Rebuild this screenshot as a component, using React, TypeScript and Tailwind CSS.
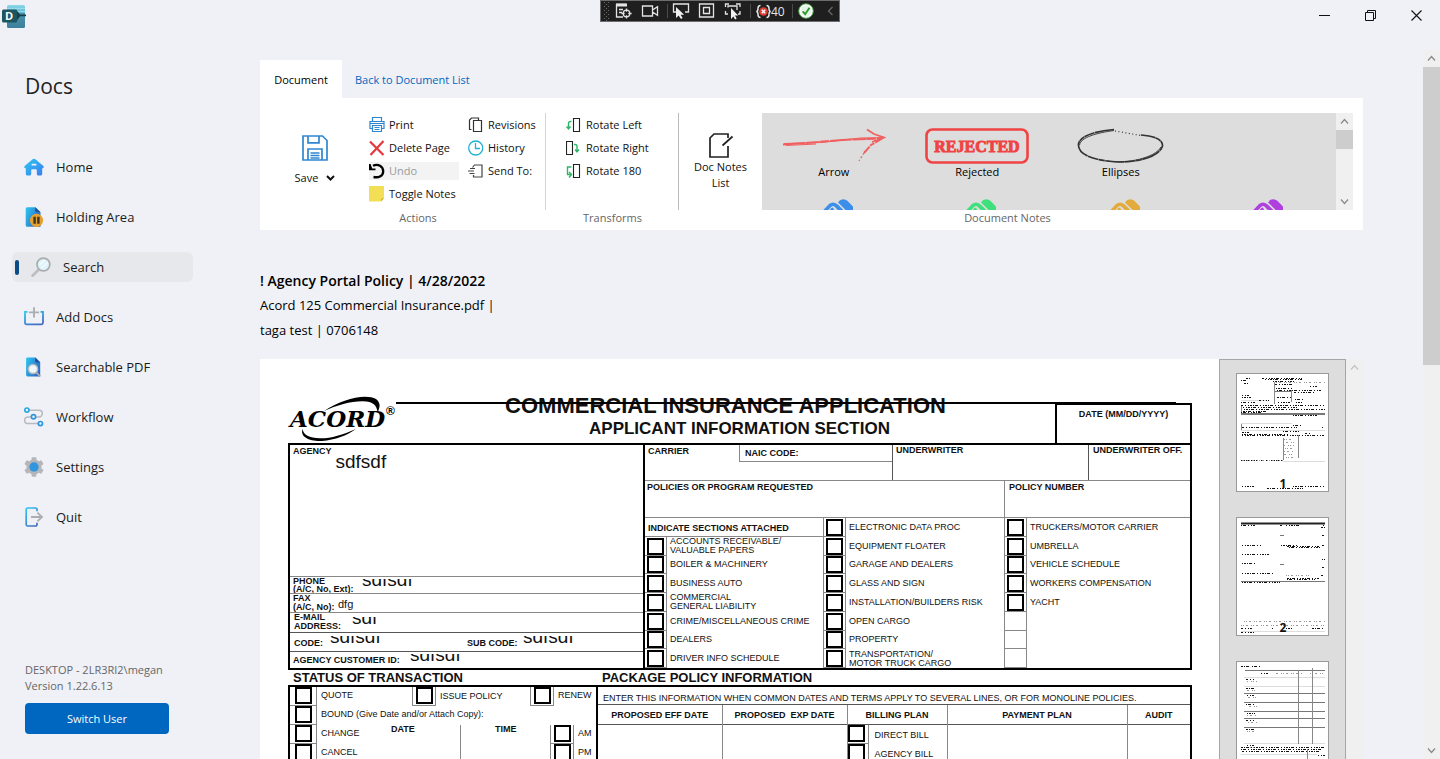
import React from "react";

type Kids = { children?: React.ReactNode };

/* ---------- navigation icons ---------- */

function Gradients() {
  return (
    <svg width="0" height="0" className="absolute" aria-hidden="true">
      <defs>
        <linearGradient id="sky" x1="0" y1="0" x2="1" y2="1">
          <stop offset="0" stopColor="#2fc8f2" />
          <stop offset="1" stopColor="#3a7cf0" />
        </linearGradient>
        <linearGradient id="page" x1="0" y1="0.2" x2="1" y2="0.8">
          <stop offset="0" stopColor="#2cc0ee" />
          <stop offset="1" stopColor="#2f5fbe" />
        </linearGradient>
        <linearGradient id="edge" x1="0" y1="0" x2="0.6" y2="1">
          <stop offset="0" stopColor="#2fc8f2" />
          <stop offset="1" stopColor="#4470c4" />
        </linearGradient>
        <linearGradient id="logo" x1="0" y1="0" x2="0" y2="1">
          <stop offset="0" stopColor="#8ad8ea" />
          <stop offset="0.35" stopColor="#5fb6cc" />
          <stop offset="0.36" stopColor="#4a94ad" />
          <stop offset="1" stopColor="#3d7f9b" />
        </linearGradient>
      </defs>
    </svg>
  );
}

const HomeIcon = () => (
  <svg width="20" height="20" viewBox="0 0 20 20">
    <path
      fillRule="evenodd"
      fill="url(#sky)"
      d="M8.6 2.2a2.4 2.4 0 0 1 2.8 0l7.7 6.5c1.3 1.2.6 2.6-.9 2.6V17a1.6 1.6 0 0 1-1.6 1.5h-2.2A1.6 1.6 0 0 1 12.800 17v-3.500c0-.8-.5-1.300-1.200-1.300H8.400c-.7 0-1.200.5-1.200 1.300V17a1.600 1.600 0 0 1-1.600 1.500H3.400A1.600 1.600 0 0 1 1.800 17v-5.700c-1.500 0-2.200-1.400-.9-2.600zM8.400 6.800a.9.9 0 0 0 0 1.800h3.200a.9.9 0 0 0 0-1.800z"
    />
  </svg>
);
const HoldingIcon = () => (
  <svg width="20" height="20" viewBox="0 0 20 20">
    <path d="M3.200.2h8.300l5 5v14.600H3.200A1.500 1.500 0 0 1 1.700 18.300V1.700A1.500 1.500 0 0 1 3.200.2z" fill="url(#page)" />
    <path d="M11.200.2l5.300 5h-3.800a1.500 1.500 0 0 1-1.500-1.500z" fill="#2350a0" />
    <circle cx="12.500" cy="13.300" r="6.600" fill="#e8a02c" />
    <path d="M9.400 9.800h2.400v7H9.400zM13.200 9.800h2.400v7h-2.400z" fill="#3b3428" />
  </svg>
);
const SearchIcon = () => (
  <svg width="20" height="20" viewBox="0 0 20 20">
    <path d="M1.500 18.700l6.300-6.200" stroke="#bdbdbf" strokeWidth="2.600" strokeLinecap="round" />
    <circle cx="12.400" cy="7.500" r="6.400" fill="#dff3fb" stroke="#a9abae" strokeWidth="1.700" />
    <path d="M8.600 8l5-4.800M10.500 11l6-5.600" stroke="#f3fbff" strokeWidth="1.300" />
  </svg>
);
const AddIcon = () => (
  <svg width="20" height="20" viewBox="0 0 20 20" fill="none">
    <path d="M3.500 4.800H1V15.500A1.800 1.800 0 0 0 2.800 17.300h14.400a1.800 1.800 0 0 0 1.800-1.800V4.800h-2.500" stroke="url(#edge)" strokeWidth="1.800" />
    <path d="M10 .3v10.200M4.900 5.400h10.200" stroke="#acaeb1" strokeWidth="1.900" />
  </svg>
);
const PdfIcon = () => (
  <svg width="20" height="20" viewBox="0 0 20 20">
    <path d="M3.500.4h8l4.700 4.800v14.300H3.500A1.400 1.400 0 0 1 2.100 18.100V1.800A1.400 1.400 0 0 1 3.500.4z" fill="url(#page)" />
    <path d="M11.200.4l5 5h-3.700a1.300 1.300 0 0 1-1.300-1.300z" fill="#234a9c" />
    <path d="M12.200 15.300l4 4" stroke="#a9abae" strokeWidth="1.900" />
    <circle cx="9" cy="12" r="4.600" fill="#eef7fc" stroke="#b6babf" strokeWidth="1.500" />
  </svg>
);
const WorkflowIcon = () => (
  <svg width="20" height="20" viewBox="0 0 20 20" fill="none">
    <path d="M4 3.200h11a3.300 3.300 0 0 1 0 6.700H4a3.300 3.300 0 0 0 0 6.700h11" stroke="#b9bbbe" strokeWidth="1.500" />
    <circle cx="2.900" cy="3.100" r="2.100" fill="#e8f6fd" stroke="#2aa6e0" strokeWidth="1.700" />
    <circle cx="9.500" cy="9.800" r="2.100" fill="#e8f6fd" stroke="#2f95dc" strokeWidth="1.700" />
    <circle cx="16.400" cy="16.600" r="2.100" fill="#e8f6fd" stroke="#2f95dc" strokeWidth="1.700" />
  </svg>
);
const SettingsIcon = () => (
  <svg width="20" height="20" viewBox="0 0 20 20">
    <g fill="#b5b6b9">
      <circle cx="10" cy="10" r="7.600" />
      <rect x="7.600" y=".2" width="4.800" height="19.600" rx="1" />
      <rect x="7.600" y=".2" width="4.800" height="19.600" rx="1" transform="rotate(60 10 10)" />
      <rect x="7.600" y=".2" width="4.800" height="19.600" rx="1" transform="rotate(120 10 10)" />
    </g>
    <circle cx="10" cy="10" r="4.700" fill="#3096dd" />
  </svg>
);
const QuitIcon = () => (
  <svg width="20" height="20" viewBox="0 0 20 20" fill="none">
    <path d="M13 4.300V2.400A1.400 1.400 0 0 0 11.600 1H3.800A1.600 1.600 0 0 0 2.200 2.600v14.800A1.600 1.600 0 0 0 3.800 19h7.800A1.400 1.400 0 0 0 13 17.600v-1.900" stroke="url(#edge)" strokeWidth="1.700" />
    <path d="M7 10h10.500M13.400 5.600L18 10l-4.600 4.400" stroke="#acaeb1" strokeWidth="1.800" />
  </svg>
);

const navItems = [
  { label: "Home", icon: HomeIcon },
  { label: "Holding Area", icon: HoldingIcon },
  { label: "Search", icon: SearchIcon, active: true },
  { label: "Add Docs", icon: AddIcon },
  { label: "Searchable PDF", icon: PdfIcon },
  { label: "Workflow", icon: WorkflowIcon },
  { label: "Settings", icon: SettingsIcon },
  { label: "Quit", icon: QuitIcon },
];

/* ---------- title bar ---------- */

function TitleBar() {
  const stroke = { fill: "none", stroke: "#e4e4e4", strokeWidth: 1.300 };
  return (
    <header className="grid h-8 shrink-0 grid-cols-[1fr_auto_1fr] items-start">
      <svg width="26" height="28" viewBox="0 0 26 28" className="mt-1 ml-0.5" aria-label="Docs logo">
        <rect x="5" y="1" width="18" height="23" rx="1.500" fill="url(#logo)" />
        <path d="M5 4.500h18M5 7.500h18" stroke="#a6e4f1" strokeWidth=".7" />
        <path d="M14 5.500l4 5h6v1.700h-6L14 18z" fill="#173f49" />
        <rect x="0" y="5.500" width="15" height="13" rx="1.500" fill="#1d5561" />
        <text x="3" y="16" fontSize="11" fontWeight="bold" fill="#fff" fontFamily="Open Sans, sans-serif">D</text>
      </svg>
      <div className="flex h-[22px] w-[240px] items-center border border-[#6d6d6d] bg-[#1f1f1f]">
        <svg width="238" height="20" viewBox="0 0 238 20" className="shrink-0">
          <g fill="#6a6a6a">
            {[0, 1, 2, 3, 4].map((r) => (
              <g key={r}>
                <rect x="3" y={1 + r * 4} width="1" height="1" />
                <rect x="7" y={1 + r * 4} width="1" height="1" />
                <rect x="5" y={3 + r * 4} width="1" height="1" />
              </g>
            ))}
          </g>
          <g {...stroke}>
            <path d="M22 16h-6.500V3.500H25M18 8.500h4M18 11.500h3" />
            <path d="M15 2.500h11v3H15z" fill="#e4e4e4" stroke="none" />
            <circle cx="25.500" cy="12.500" r="3.300" />
            <path d="M25.500 7.500v3.200M25.500 14.300v3.300M20.500 12.500h3.200M27.300 12.500h3.300" />
            <path d="M41.500 5h10v10h-10zM51.500 9l5-3.300v8.600l-5-3.300" />
            <path d="M77 11h-4.500V3h15v8H84" />
            <path d="M98.500 3h14v13h-14zM102.500 6.500h6v6h-6z" />
            <path d="M124.500 6V3h3.500M135 3h4v3M139 10v3h-2M127 13h-2.500v-3M127 6.500V5h9v4" />
          </g>
          <path d="M75 6v11l2.600-2.600L80 18l1.600-1-2-3.200h3.600zM130 7v11l2.400-2.600 1.700 3 1.600-.9-1.800-3h3.300z" fill="#f2f2f2" />
          <path d="M66.500 3v14M149.500 3v14M191.500 3v14" stroke="#4a4a4a" />
          <g fill="none" stroke="#e6e6e6" strokeWidth="1.500">
            <path d="M159.500 4.500q-2.500 0-2.500 3t-1.800 3q1.800 0 1.800 3t2.500 3M165.500 4.500q2.500 0 2.500 3t1.800 3q-1.800 0-1.800 3t-2.500 3" />
          </g>
          <circle cx="162.500" cy="10.500" r="4.300" fill="#e03c31" />
          <path d="M160.800 8.800l3.400 3.400M164.200 8.800l-3.400 3.400" stroke="#fff" strokeWidth="1.400" />
          <text x="170" y="15" fontSize="12" fill="#e6e6e6" fontFamily="Open Sans, sans-serif">40</text>
          <circle cx="205" cy="10" r="7.300" fill="#fff" stroke="#3c9b3c" strokeWidth="1" />
          <circle cx="205" cy="10" r="5.600" fill="#e7f5e7" />
          <path d="M201.700 10.300l2.500 2.800 4.300-6.300" fill="none" stroke="#2e9a35" strokeWidth="1.900" />
          <path d="M231.500 6l-4 4 4 4" fill="none" stroke="#6a6a6a" strokeWidth="1.200" />
        </svg>
      </div>
      <div className="flex justify-end pr-px">
        <button aria-label="Minimize" className="flex h-[30px] w-[46px] items-center justify-center">
          <svg width="11" height="11"><path d="M0 5.500h11" stroke="#111" /></svg>
        </button>
        <button aria-label="Restore" className="flex h-[30px] w-[46px] items-center justify-center">
          <svg width="11" height="11" fill="none" stroke="#111"><path d="M.5 2.500h8v8h-8zM2.500 2.500v-2h8v8h-2" /></svg>
        </button>
        <button aria-label="Close" className="flex h-[30px] w-[46px] items-center justify-center">
          <svg width="11" height="11" fill="none" stroke="#111" strokeWidth="1.100"><path d="M.5.5l10 10M10.500.5l-10 10" /></svg>
        </button>
      </div>
    </header>
  );
}

/* ---------- sidebar ---------- */

function Sidebar() {
  return (
    <aside className="flex w-[205px] shrink-0 flex-col pb-[25px]">
      <h1 className="mt-[39px] pl-[25px] text-[21px] leading-[30px] text-[#222]">Docs</h1>
      <nav className="mt-[51px] flex flex-col gap-5 pl-3">
        {navItems.map(({ label, icon: Icon, active }) => (
          <a
            key={label}
            href="#"
            className={
              active
                ? "flex h-[30px] w-[181px] items-center gap-3 rounded-md bg-[#e7e8ec] pl-[3px] text-[13px] text-[#1b1b1b]"
                : "flex h-[30px] w-[181px] items-center gap-3 pl-3 text-[13px] text-[#1b1b1b]"
            }
          >
            {active && <span className="h-[15px] w-1 rounded-full bg-[#0b4a85]" />}
            <Icon />
            <span className="pt-0.5">{label}</span>
          </a>
        ))}
      </nav>
      <div className="mt-auto pl-[25px]">
        <p className="text-[11px] leading-4 text-[#666]">
          DESKTOP - 2LR3RI2\megan
          <br />
          Version 1.22.6.13
        </p>
        <button className="mt-[9px] h-[31px] w-36 rounded-sm bg-[#0067c0] pt-px text-[11px] text-white">Switch User</button>
      </div>
    </aside>
  );
}

/* ---------- ribbon ---------- */

const PrintIcon = () => (
  <svg width="16" height="16" viewBox="0 0 16 16" fill="none" stroke="#2f86d0" strokeWidth="1.200">
    <path d="M3.500 4.500v-4h9v4M3.500 11.500h-2.500v-7h14v7h-2.500M3.500 8.500h9v6h-9zM1 6.500h14M5.500 10.500h5M5.500 12.500h5" />
  </svg>
);
const DeleteIcon = () => (
  <svg width="16" height="16" viewBox="0 0 16 16" stroke="#e5393d" strokeWidth="2.200" fill="none">
    <path d="M1 1.500l13.500 13.500M14.500 1L1.500 15" />
  </svg>
);
const UndoIcon = () => (
  <svg width="16" height="16" viewBox="0 0 16 16" fill="none">
    <path d="M4 2.800C9 .2 14.200 3.500 14.200 8.200S10 15 4.500 14" stroke="#000" strokeWidth="2.300" />
    <path d="M0 1v6.200h6.500V5.500H3.200L1.600 1z" fill="#000" />
  </svg>
);
const NoteIcon = () => (
  <svg width="16" height="16" viewBox="0 0 16 16">
    <path d="M0 0h15v12.500L12 15.500H0z" fill="#f3df55" />
    <path d="M15 12.500h-3v3z" fill="#d2b631" />
  </svg>
);
const RevisionsIcon = () => (
  <svg width="16" height="16" viewBox="0 0 16 16" fill="none" stroke="#333" strokeWidth="1.200">
    <path d="M5.500 3.500h8v11h-8zM3.500 12.500h-2V3L3.500 1H10.500v2.500" />
  </svg>
);
const HistoryIcon = () => (
  <svg width="16" height="16" viewBox="0 0 16 16" fill="none" stroke="#1fb2d6" strokeWidth="1.300">
    <circle cx="7.700" cy="8" r="7" />
    <path d="M7.500 3v5.500H12" />
  </svg>
);
const SendIcon = () => (
  <svg width="16" height="16" viewBox="0 0 16 16" fill="none" stroke="#444" strokeWidth="1.200">
    <path d="M4.500 4.500l2-2.500H14v12H5.500v-2M2 5.500h5M0 8h6M1.500 10.500h5" />
  </svg>
);
const RotateLeftIcon = () => (
  <svg width="16" height="16" viewBox="0 0 16 16" fill="none" strokeWidth="1.100">
    <path d="M7.500 1.500h6v13h-6z" stroke="#222" />
    <path d="M5.500 4.500h-1q-2 0-2 2V12M.5 9.500l2 2.500 2-2.500" stroke="#2fb56a" strokeWidth="1.400" />
  </svg>
);
const RotateRightIcon = () => (
  <svg width="16" height="16" viewBox="0 0 16 16" fill="none" strokeWidth="1.100">
    <path d="M.5 1.500h6v13h-6z" stroke="#222" />
    <path d="M8 4.500h1q2 0 2 2V12M9 9.500l2 2.500 2-2.500" stroke="#2fb56a" strokeWidth="1.400" />
  </svg>
);
const Rotate180Icon = () => (
  <svg width="16" height="16" viewBox="0 0 16 16" fill="none" strokeWidth="1.100">
    <path d="M7.500 1.500h6v13h-6z" stroke="#222" />
    <path d="M5.500 4H1.500v7.500H5M3 9l2.500 2.500L3 14.500" stroke="#2fb56a" strokeWidth="1.400" />
  </svg>
);

function Tool({ icon: Icon, children, off }: Kids & { icon: () => React.ReactElement; off?: boolean }) {
  return (
    <button
      disabled={off}
      className={
        off
          ? "flex h-[18px] items-center gap-1 overflow-hidden bg-[#f3f3f3] text-[11px] whitespace-nowrap text-[#9b9b9b]"
          : "flex h-[18px] items-center gap-1 overflow-hidden text-[11px] whitespace-nowrap text-[#111]"
      }
    >
      <span className="shrink-0">
        <Icon />
      </span>
      {children}
    </button>
  );
}

function GroupLabel({ children }: Kids) {
  return <div className="text-center text-[11px] leading-4 text-[#666]">{children}</div>;
}

function Chevron({ up, pale }: { up?: boolean; pale?: boolean }) {
  return (
    <svg width="9" height="9" viewBox="0 0 9 9" fill="none" stroke={pale ? "#c4c4c4" : "#8b8b8b"} strokeWidth="1.300">
      <path d={up ? "M1 6.500l3.500-4 3.500 4" : "M1 2.500l3.500 4 3.500-4"} />
    </svg>
  );
}

const ArrowStamp = () => (
  <svg width="104" height="36" viewBox="0 0 104 36" fill="none" stroke="#f16060">
    <path d="M1 16.500L30 14.500L60 12L98 10.500" strokeWidth="2" strokeDasharray="22 .6 14 .4 9 1" />
    <path d="M2 15.500L40 14.500L78 10L101 9.500M4 17.500L34 16" strokeWidth="1.200" />
    <path d="M85 1.500L92 6L102 9.500L90 14" strokeWidth="1.700" />
    <path d="M101 10L89 17L82 25" strokeWidth="2" strokeDasharray="9 1 5 1" />
    <path d="M82 25L77 33" strokeWidth="1.200" strokeDasharray="2 2" />
  </svg>
);
const RejectedStamp = () => (
  <svg width="104" height="36" viewBox="0 0 104 36">
    <rect x="1.500" y="1.500" width="101" height="33" rx="6" fill="none" stroke="#f04343" strokeWidth="2.600" />
    <text x="52" y="24" textAnchor="middle" fontSize="16" fontWeight="bold" fill="#f04343" stroke="#f04343" strokeWidth=".9" fontFamily="Liberation Serif, serif">
      REJECTED
    </text>
  </svg>
);
const EllipseStamp = () => (
  <svg width="88" height="36" viewBox="0 0 88 36" fill="none" stroke="#333">
    <path d="M37 1.500C18 3 3 8 1.500 16C.5 27 18 33 42 34C66 34 83 27 85.500 18C86 11 76 8 64 7" strokeWidth="1.700" strokeDasharray="19 .5 11 .4 6 .4" />
    <path d="M37 2.500C20 5 4 9 2.500 17M30 33C50 36 78 30 84 19" strokeWidth=".9" />
    <path d="M38 3L64 7.500" strokeWidth="1.200" strokeDasharray="1 2.500" />
  </svg>
);
function Marker({ color }: { color: string }) {
  return (
    <svg width="30" height="30" viewBox="0 0 30 30">
      <path d="M0 14L7 6.500q3-2.500 6 0L21 15" fill="none" stroke={color} strokeWidth="3.600" />
      <path d="M7 13q-.5-4 3-4.500L12 13z" fill={color} />
      <rect x="15.500" y="0" width="11.500" height="18" rx="5.700" transform="rotate(-45 21 7)" fill={color} />
      <path d="M13 2.500l14 14" stroke="#ddd" strokeWidth="1.600" />
    </svg>
  );
}

function StampTile({ label, children }: Kids & { label: string }) {
  return (
    <button className="flex h-[84px] flex-col items-center pt-[15px] text-[11px] leading-4 text-black">
      {children}
      {label}
    </button>
  );
}

function Ribbon() {
  return (
    <section>
      <div className="flex h-[38px]">
        <button className="w-[82px] bg-white pt-0.5 text-[11px] text-black">Document</button>
        <a href="#" className="flex items-center px-[13px] pt-0.5 text-[11px] text-[#0067c0]">Back to Document List</a>
      </div>
      <div className="flex h-[132px] bg-white pt-[15px] pr-[10px] pl-[30px]">
        <div className="w-64 shrink-0">
          <div className="flex h-[97px] border-r border-[#d4d4d4]">
            <button className="flex w-[50px] flex-col items-center pt-[22px] text-[11px] leading-4 text-[#111]">
              <svg width="26" height="26" viewBox="0 0 26 26" fill="none" stroke="#2f86d0" strokeWidth="1.700">
                <path d="M1 1h19.500L25 5.500V25H1zM6 1.500v6.300h11V1.500M6 25V14h14v11M8.500 18h9M8.500 20.500h9M8.500 23h9" />
              </svg>
              <span className="mt-[9px] flex items-center gap-2">
                Save
                <svg width="9" height="6"><path d="M1 1l3.500 3.500L8 1" fill="none" stroke="#111" strokeWidth="2" /></svg>
              </span>
            </button>
            <div className="ml-[29px] flex w-[90px] flex-col gap-[5px] pt-[3px]">
              <Tool icon={PrintIcon}>Print</Tool>
              <Tool icon={DeleteIcon}>Delete Page</Tool>
              <Tool icon={UndoIcon} off>Undo</Tool>
              <Tool icon={NoteIcon}>Toggle Notes</Tool>
            </div>
            <div className="ml-[9px] flex flex-col gap-[5px] pt-[3px]">
              <Tool icon={RevisionsIcon}>Revisions</Tool>
              <Tool icon={HistoryIcon}>History</Tool>
              <Tool icon={SendIcon}>Send To:</Tool>
            </div>
          </div>
          <GroupLabel>Actions</GroupLabel>
        </div>
        <div className="w-[133px] shrink-0">
          <div className="flex h-[97px] flex-col gap-[5px] border-r border-[#bbb] pt-[3px] pl-5">
            <Tool icon={RotateLeftIcon}>Rotate Left</Tool>
            <Tool icon={RotateRightIcon}>Rotate Right</Tool>
            <Tool icon={Rotate180Icon}>Rotate 180</Tool>
          </div>
          <GroupLabel>Transforms</GroupLabel>
        </div>
        <div className="min-w-0 flex-1">
          <div className="flex h-[97px]">
            <button className="flex w-[83px] shrink-0 flex-col items-center pt-5 text-[11px] leading-4 text-[#111]">
              <svg width="26" height="26" viewBox="0 0 26 26" fill="none" stroke="#222" strokeWidth="1.700">
                <path d="M20 5V1H6L2 5v19h18V13" />
                <path d="M14.500 12.500L24.500 3.500" />
              </svg>
              Doc Notes
              <br />
              List
            </button>
            <div className="grid flex-1 grid-cols-4 content-start overflow-hidden bg-[#ddd]">
              <StampTile label="Arrow"><ArrowStamp /></StampTile>
              <StampTile label="Rejected"><RejectedStamp /></StampTile>
              <StampTile label="Ellipses"><EllipseStamp /></StampTile>
              <span />
              {["#3b8eea", "#3fe07c", "#e2ab3c", "#b03fe0"].map((c) => (
                <div key={c} className="flex justify-center pt-0.5 pl-2">
                  <Marker color={c} />
                </div>
              ))}
            </div>
            <div className="flex w-[17px] flex-col items-center bg-[#f0f0f0]">
              <span className="flex h-[17px] items-center"><Chevron up /></span>
              <span className="h-[19px] w-full bg-[#cdcdcd]" />
              <span className="mt-auto flex h-[17px] items-center"><Chevron /></span>
            </div>
          </div>
          <div className="pr-[17px]">
            <GroupLabel>Document Notes</GroupLabel>
          </div>
        </div>
      </div>
    </section>
  );
}

/* ---------- insurance form ---------- */

function Box({ label }: { label: string }) {
  return (
    <input
      type="checkbox"
      aria-label={label}
      className="block size-[17px] shrink-0 appearance-none border-2 border-black bg-white"
    />
  );
}

/* The lower half of a value whose field is shorter than its text */
function CutValue({ children }: Kids) {
  return (
    <span className="flex h-[9px] items-end overflow-hidden">
      <span className="text-[19px] leading-[17px] font-normal">{children}</span>
    </span>
  );
}

function SectionRow({ label, empty }: { label: string; empty?: boolean }) {
  const lines = label.split("\n");
  return (
    <div className="flex min-h-0">
      <div className="flex w-[22px] shrink-0 items-end justify-center border-r border-b border-[#888]">
        {!empty && <Box label={lines.join(" ")} />}
      </div>
      <div className="flex flex-col justify-center pl-[3px] leading-[9px] whitespace-nowrap">
        {lines.map((l) => (
          <span key={l}>{l}</span>
        ))}
      </div>
    </div>
  );
}

const colA = [
  "ACCOUNTS RECEIVABLE/\nVALUABLE PAPERS",
  "BOILER & MACHINERY",
  "BUSINESS AUTO",
  "COMMERCIAL\nGENERAL LIABILITY",
  "CRIME/MISCELLANEOUS CRIME",
  "DEALERS",
  "DRIVER INFO SCHEDULE",
];
const colB = [
  "ELECTRONIC DATA PROC",
  "EQUIPMENT FLOATER",
  "GARAGE AND DEALERS",
  "GLASS AND SIGN",
  "INSTALLATION/BUILDERS RISK",
  "OPEN CARGO",
  "PROPERTY",
  "TRANSPORTATION/\nMOTOR TRUCK CARGO",
];
const colC = ["TRUCKERS/MOTOR CARRIER", "UMBRELLA", "VEHICLE SCHEDULE", "WORKERS COMPENSATION", "YACHT"];

function AcordLogo() {
  return (
    <svg width="108" height="48" viewBox="0 0 108 48" aria-label="ACORD logo">
      <path d="M36 16C53 4 78-2 88 4c5 4 4 8 1.500 13.500C89 10 85 6.500 75 6.200C63 6 49 10 36 16z" />
      <path d="M14.500 34C12 42 21 46.500 34 46c13-1 25-5.500 34-12C54 40 43 43.500 32 43.300C21 43 15.500 40 14.500 34z" />
      <text x="2" y="31.500" fontSize="23" fontWeight="bold" fontStyle="italic" fontFamily="DejaVu Serif, serif">ACORD</text>
      <text x="98" y="20" fontSize="12" fontWeight="bold" fontFamily="Liberation Sans, sans-serif">®</text>
    </svg>
  );
}

function FormHeader() {
  return (
    <div className="relative flex h-12">
      <div className="absolute top-[7px] right-4 left-[108px] h-0.5 bg-black" />
      <AcordLogo />
      <div className="min-w-0 flex-1 text-center font-bold whitespace-nowrap">
        <div className="text-[22px] leading-[22px]">COMMERCIAL INSURANCE APPLICATION</div>
        <div className="pl-7 text-[17px] leading-[24px]">APPLICANT INFORMATION SECTION</div>
      </div>
      <div className="mt-2 w-[137px] shrink-0 border-t-2 border-r-2 border-l-2 border-black pt-[3px] text-center text-[9px] leading-[12px] font-bold">
        DATE (MM/DD/YYYY)
      </div>
    </div>
  );
}

function AgencyPanel() {
  return (
    <div className="flex w-[355px] shrink-0 flex-col border-r-2 border-black font-bold">
      <div className="flex h-[131px] pl-[3px] leading-3">
        AGENCY
        <span className="pt-[7px] pl-1 text-[19px] leading-5 font-normal">sdfsdf</span>
      </div>
      <div className="flex h-[17px] shrink-0 border-t border-[#888] pl-[3px] leading-[8px]">
        <div className="w-[69px]">PHONE<br />(A/C, No, Ext):</div>
        <div className="pt-0.5"><CutValue>sdfsdf</CutValue></div>
      </div>
      <div className="flex h-[19px] shrink-0 border-t border-[#888] pl-[3px] leading-[9px]">
        <div className="w-[45px]">FAX<br />(A/C, No):</div>
        <span className="pt-1 text-[11px] leading-3 font-normal">dfg</span>
      </div>
      <div className="flex h-5 shrink-0 border-t border-[#888] pl-1 leading-[9px]">
        <div className="w-[58px]">E-MAIL<br />ADDRESS:</div>
        <div className="pt-1"><CutValue>sdf</CutValue></div>
      </div>
      <div className="flex h-[19px] shrink-0 border-t border-[#555] pl-1 leading-5">
        <div className="w-[36px]">CODE:</div>
        <div className="w-[137px] pt-[3px]"><CutValue>sdfsdf</CutValue></div>
        <div className="w-[56px]">SUB CODE:</div>
        <div className="pt-[3px]"><CutValue>sdfsdf</CutValue></div>
      </div>
      <div className="flex flex-1 border-t border-[#555] pl-[3px] leading-4">
        <div className="w-[117px]">AGENCY CUSTOMER ID:</div>
        <div className="pt-0.5"><CutValue>sdfsdf</CutValue></div>
      </div>
    </div>
  );
}

function CarrierPanel() {
  return (
    <div className="flex min-w-0 flex-1 flex-col">
      <div className="flex h-9 shrink-0 border-b border-[#888] leading-[11px] font-bold">
        <div className="w-[94px] pt-px pl-[3px]">CARRIER</div>
        <div className="h-[17px] w-[153px] border-b border-l border-[#888] pt-[3px] pl-[5px]">NAIC CODE:</div>
        <div className="w-[197px] border-r border-l border-[#555] pl-[3px]">UNDERWRITER</div>
        <div className="pl-1 whitespace-nowrap">UNDERWRITER OFF.</div>
      </div>
      <div className="flex h-[37px] shrink-0 border-b border-[#888] leading-3 font-bold">
        <div className="w-[359px] pl-0.5">POLICIES OR PROGRAM REQUESTED</div>
        <div className="flex-1 border-l border-[#888] pl-1">POLICY NUMBER</div>
      </div>
      <div className="flex flex-1">
        <div className="grid w-[178px] grid-rows-8">
          <div className="flex items-center border-b border-[#888] pt-1 pl-[3px] font-bold">INDICATE SECTIONS ATTACHED</div>
          {colA.map((l) => (
            <SectionRow key={l} label={l} />
          ))}
        </div>
        <div className="grid w-[181px] grid-rows-8 border-l border-[#888]">
          {colB.map((l) => (
            <SectionRow key={l} label={l} />
          ))}
        </div>
        <div className="grid flex-1 grid-rows-8 border-l border-[#888]">
          {colC.map((l) => (
            <SectionRow key={l} label={l} />
          ))}
          <SectionRow label="" empty />
          <SectionRow label="" empty />
          <SectionRow label="" empty />
        </div>
      </div>
    </div>
  );
}

function CheckCell({ label, side }: { label: string; side?: boolean }) {
  return (
    <div
      className={
        side
          ? "flex h-[19px] w-6 shrink-0 justify-center border-r border-b border-l border-[#888]"
          : "flex h-[19px] w-[27px] shrink-0 justify-center border-r border-b border-[#888]"
      }
    >
      <Box label={label} />
    </div>
  );
}

function StatusPanel() {
  return (
    <div className="w-[310px] shrink-0 border-t-2 border-r-2 border-l-2 border-black">
      <div className="flex h-[19px] leading-4">
        <CheckCell label="Quote" />
        <span className="w-[95px] pl-1">QUOTE</span>
        <CheckCell label="Issue policy" side />
        <span className="w-[94px] pl-1 leading-[18px]">ISSUE POLICY</span>
        <CheckCell label="Renew" side />
        <span className="pl-1">RENEW</span>
      </div>
      <div className="flex h-[19px] leading-4">
        <CheckCell label="Bound" />
        <span className="pl-1">BOUND (Give Date and/or Attach Copy):</span>
      </div>
      <div className="flex">
        <div>
          {["CHANGE", "CANCEL", "RENEWAL"].map((l) => (
            <div key={l} className="flex h-[19px] leading-4">
              <CheckCell label={l} />
              <span className="pl-1">{l}</span>
            </div>
          ))}
        </div>
        <div className="flex flex-1 justify-end leading-[8px] font-bold">
          <span className="w-[69px]">DATE</span>
          <span className="w-[90px] border-l border-[#888] pl-[34px]">TIME</span>
        </div>
        <div className="w-[46px]">
          {["AM", "PM", ""].map((l) => (
            <div key={l} className="flex h-[19px] leading-4">
              <CheckCell label={l || "None"} side />
              <span className="pl-1">{l}</span>
            </div>
          ))}
        </div>
      </div>
    </div>
  );
}

function PackagePanel() {
  return (
    <div className="flex min-w-0 flex-1 flex-col border-t-2 border-r-2 border-black">
      <div className="h-[18px] shrink-0 border-b border-[#555] pt-0.5 pl-[5px] leading-[18px] whitespace-nowrap">
        ENTER THIS INFORMATION WHEN COMMON DATES AND TERMS APPLY TO SEVERAL LINES, OR FOR MONOLINE POLICIES.
      </div>
      <table className="w-full flex-1 table-fixed border-collapse">
        <thead>
          <tr className="h-[19px] border-b border-[#555] text-center">
            <th className="w-[124px] p-0 pt-0.5">PROPOSED EFF DATE</th>
            <th className="w-[125px] border-l border-[#888] p-0 pt-0.5">PROPOSED&nbsp; EXP DATE</th>
            <th className="w-[100px] border-l border-[#888] p-0 pt-0.5">BILLING PLAN</th>
            <th className="w-[180px] border-l border-[#888] p-0 pt-0.5">PAYMENT PLAN</th>
            <th className="border-l border-[#888] p-0 pt-0.5">AUDIT</th>
          </tr>
        </thead>
        <tbody>
          <tr className="h-[60px] align-top">
            <td className="p-0" />
            <td className="border-l border-[#888] p-0" />
            <td className="border-l border-[#888] p-0">
              {["DIRECT BILL", "AGENCY BILL", ""].map((l) => (
                <div key={l} className="flex h-[19px] items-center">
                  <div className="flex h-[19px] w-[21px] border-r border-b border-[#888]">
                    <Box label={l || "Other"} />
                  </div>
                  <span className="pt-[3px] pl-1.5">{l}</span>
                </div>
              ))}
            </td>
            <td className="border-l border-[#888] p-0" />
            <td className="border-l border-[#888] p-0" />
          </tr>
        </tbody>
      </table>
    </div>
  );
}

function InsuranceForm() {
  return (
    <div className="min-w-0 flex-1 overflow-hidden bg-white pt-9 pr-[27px] pl-[28px] font-['Liberation_Sans',Arial,sans-serif] text-[9px] leading-[11px] text-[#111]">
      <FormHeader />
      <div className="flex h-[227px] border-2 border-black">
        <AgencyPanel />
        <CarrierPanel />
      </div>
      <div className="flex h-[15px] text-[13px] leading-4 font-bold">
        <span className="w-[310px] pl-[5px]">STATUS OF TRANSACTION</span>
        <span className="pl-1">PACKAGE POLICY INFORMATION</span>
      </div>
      <div className="flex">
        <StatusPanel />
        <PackagePanel />
      </div>
    </div>
  );
}

/* ---------- page thumbnails ---------- */

type Mark = [number, number, number, ("text" | "faint" | "rule" | "pale" | "bold")?];

const dash = { text: "2 1 1 1 3 2 1 2 1 1", faint: "1 2 2 3 1 1", rule: "none", pale: "none", bold: "none" };
const tone = { text: "#111", faint: "#999", rule: "#777", pale: "#ddd", bold: "#222" };

function Marks({ rows }: { rows: Mark[] }) {
  return (
    <>
      {rows.map(([x1, x2, y, kind = "text"], i) => (
        <path
          key={i}
          d={`M${x1} ${y + 0.5}H${x2}`}
          stroke={tone[kind]}
          strokeWidth={kind === "bold" ? 2 : 1}
          strokeDasharray={dash[kind]}
          strokeDashoffset={i * 3}
        />
      ))}
    </>
  );
}

const pageOne: Mark[] = [
  [9, 14, 4], [4, 10, 6], [25, 65, 4], [27, 66, 5], [35, 58, 7], [7, 12, 9], [37, 88, 8, "faint"], [38, 55, 10], [72, 80, 12],
  [38, 56, 14], [38, 54, 17, "rule"], [40, 84, 16], [57, 78, 18], [4, 12, 21], [4, 14, 23], [4, 30, 26, "pale"], [4, 18, 28],
  [22, 32, 26], [40, 53, 28], [58, 66, 28], [40, 54, 23], [58, 66, 25], [4, 88, 31], [5, 60, 33], [6, 88, 35], [6, 30, 37],
  [4, 24, 38], [4, 88, 40, "rule"], [4, 88, 39, "rule"], [55, 80, 41], [4, 55, 49, "pale"], [56, 64, 51], [5, 60, 53], [84, 88, 53], [4, 88, 56, "pale"],
  [5, 12, 58], [46, 62, 57], [68, 74, 59], [4, 88, 61], [4, 52, 60], [4, 46, 86], [5, 46, 86, "faint"], [46, 88, 87, "pale"],
  [4, 17, 112], [55, 88, 112], [30, 66, 114],
];
for (let y = 65; y < 86; y += 3) pageOne.push([47, 57, y, "faint"]);

const pageTwo: Mark[] = [
  [4, 88, 5, "bold"], [4, 19, 7], [43, 46, 7], [48, 62, 7], [85, 88, 7], [84, 88, 9], [43, 47, 17, "rule"], [85, 88, 17], [4, 25, 27],
  [43, 60, 27], [50, 82, 28], [52, 84, 29], [85, 88, 27], [4, 32, 36], [4, 20, 45], [43, 47, 46, "rule"], [85, 88, 41], [85, 88, 49],
  [4, 37, 55], [48, 72, 57, "faint"], [50, 82, 60], [50, 78, 61], [84, 88, 57], [4, 88, 63, "rule"], [4, 43, 64],
  [4, 88, 103, "faint"], [4, 88, 107, "faint"], [4, 16, 110], [34, 37, 110], [48, 56, 110], [75, 88, 110], [4, 88, 113, "pale"], [4, 17, 114],
];
const pageThree: Mark[] = [[4, 12, 4], [15, 23, 4], [8, 88, 8, "rule"], [23, 32, 11], [38, 66, 11, "faint"], [70, 88, 11, "faint"]];
[15, 24, 31, 40, 49, 56, 65, 81].forEach((y) => {
  pageThree.push([7, 88, y, y % 3 ? "rule" : "pale"], [9, 18, y + 2], [10, 20, y + 4, "faint"]);
});
pageThree.push([4, 88, 85], [4, 85, 87], [5, 84, 89], [80, 88, 93], [4, 80, 92, "pale"], [81, 86, 97], [81, 86, 100]);

function Thumb({ marks, page, rules }: { marks: Mark[]; page?: string; rules?: string }) {
  return (
    <button aria-label={`Page ${page ?? "3"}`} className="h-[119px] w-[93px] shrink-0 border border-[#9a9a9a] bg-white">
      <svg width="91" height="117" viewBox="0 0 91 117" fill="none">
        <Marks rows={marks} />
        {rules && <path d={rules} stroke="#888" />}
        {page && (
          <text x="46" y="114" textAnchor="middle" fontSize="12" fontWeight="bold" fill="#111" fontFamily="Open Sans, sans-serif">
            {page}
          </text>
        )}
      </svg>
    </button>
  );
}

function Viewer() {
  return (
    <section className="mt-4 flex min-h-0 flex-1 overflow-hidden">
      <InsuranceForm />
      <div className="flex w-[127px] shrink-0 flex-col items-center gap-[25px] overflow-hidden border border-b-0 border-[#a6a6a6] bg-[#ddd] pt-[13px]">
        <Thumb marks={pageOne} page="1" rules="M37.500 8v22M54.500 16v12M46.500 64v22M61.500 61v23M4.500 50v6M4.500 32v6" />
        <Thumb marks={pageTwo} page="2" />
        <Thumb marks={pageThree} rules="M75.500 6v76M61.500 8v74M70.500 87v30" />
      </div>
      <div className="flex w-[17px] shrink-0 justify-center bg-[#f0f0f0] pt-1">
        <Chevron up pale />
      </div>
    </section>
  );
}

export default function App() {
  return (
    <div className="flex h-screen flex-col overflow-hidden bg-[#eff1f6] font-['Open_Sans','Noto_Sans',sans-serif]">
      <Gradients />
      <TitleBar />
      <div className="flex min-h-0 flex-1">
        <Sidebar />
        <main className="flex min-w-0 flex-1 flex-col pt-7 pr-[60px] pl-[55px]">
          <Ribbon />
          <div className="mt-[38px] text-[13px] leading-[25px] text-black">
            <h2 className="text-[14px] font-semibold">! Agency Portal Policy | 4/28/2022</h2>
            <p>Acord 125 Commercial Insurance.pdf |</p>
            <p>taga test | 0706148</p>
          </div>
          <Viewer />
        </main>
        <div className="mt-[18px] flex w-[17px] shrink-0 flex-col items-center bg-[#f0f0f0]">
          <span className="flex h-[17px] items-center"><Chevron up /></span>
          <span className="h-[42%] w-full bg-[#cdcdcd]" />
          <span className="mt-auto flex h-[17px] items-center"><Chevron /></span>
        </div>
      </div>
    </div>
  );
}
